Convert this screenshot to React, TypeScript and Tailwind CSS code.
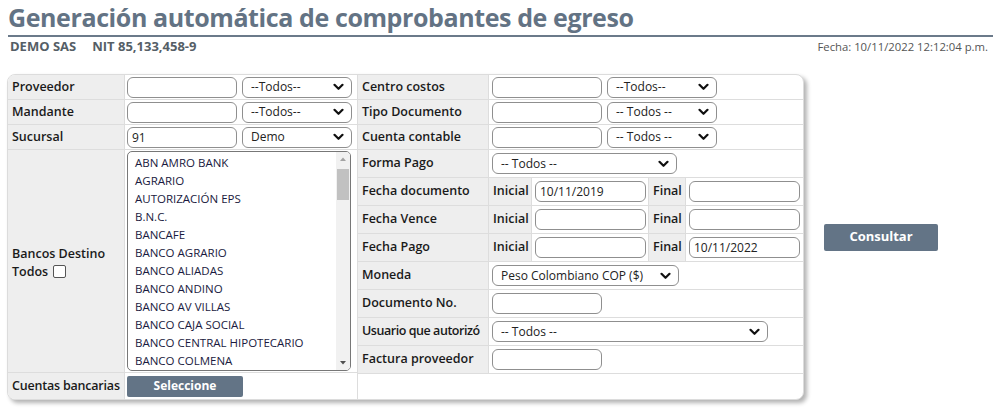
import React from "react";

const F = { fontFamily: '"Open Sans", "Noto Sans", sans-serif' };

function Chevron() {
  return (
    <svg width="11" height="8" viewBox="0 0 11 8" className="shrink-0">
      <path d="M1.5 1.8 L5.5 5.8 L9.5 1.8" fill="none" stroke="#111" strokeWidth="2.2" strokeLinecap="round" strokeLinejoin="round" />
    </svg>
  );
}

function Input({ w, value }: { w: string; value?: string }) {
  return (
    <div className={`${w} h-[21px] rounded-[6px] border border-[#8f8f8f] bg-white px-[4px] text-[12px] leading-[19px] text-[#222]`}>
      {value}
    </div>
  );
}

function Select({ w, value }: { w: string; value: string }) {
  return (
    <div className={`${w} flex h-[21px] items-center justify-between rounded-[6px] border border-[#8f8f8f] bg-white pl-[8px] pr-[7px] text-[12px] text-[#222]`}>
      <span className="leading-none">{value}</span>
      <Chevron />
    </div>
  );
}

const banks = [
  "ABN AMRO BANK",
  "AGRARIO",
  "AUTORIZACIÓN EPS",
  "B.N.C.",
  "BANCAFE",
  "BANCO AGRARIO",
  "BANCO ALIADAS",
  "BANCO ANDINO",
  "BANCO AV VILLAS",
  "BANCO CAJA SOCIAL",
  "BANCO CENTRAL HIPOTECARIO",
  "BANCO COLMENA",
];

function Label({ children, h, extra = "" }: { children: React.ReactNode; h: string; extra?: string }) {
  return (
    <div className={`${h} flex items-center whitespace-nowrap bg-[#eeeeee] pl-[4px] text-[12.5px] font-semibold text-[#1a1a1a] ${extra}`}>{children}</div>
  );
}

export default function App() {
  return (
    <div style={F} className="w-[997px] h-[408px] bg-white relative overflow-hidden">
      <div className="px-[8px] pt-[1px]">
        <h1 className="text-[25px] leading-[32px] font-bold text-[#637384] tracking-[-0.4px]">
          Generación automática de comprobantes de egreso
        </h1>
        <div className="mt-[2px] h-[2px] w-[985px] bg-[#6b7a8a]" />
        <div className="flex items-start justify-between pr-[1px]">
          <div className="pl-[2px] pt-[1px] text-[13px] font-bold text-[#555e66] leading-[17px]">
            DEMO SAS<span className="ml-[16px]">NIT 85,133,458-9</span>
          </div>
          <div className="pt-[2px] text-[11.3px] leading-[15px] text-[#555]">Fecha: 10/11/2022 12:12:04 p.m.</div>
        </div>
      </div>

      <div className="mt-[19px] ml-[7px] flex items-center gap-[20px]">
        {/* panel */}
        <div className="flex w-[797px] h-[326px] rounded-[8px] border border-[#dcdcdc] bg-white shadow-[3px_3px_4px_rgba(0,0,0,0.3)] overflow-hidden">
          {/* left table */}
          <div className="flex w-[349px] flex-col">
            <div className="flex h-[25px] border-b border-[#dddddd]">
              <Label h="h-full w-[117px]" extra="border-r border-[#dddddd]">Proveedor</Label>
              <div className="flex flex-1 items-center gap-[5px] pl-[2px]">
                <Input w="w-[110px]" />
                <Select w="w-[110px]" value="--Todos--" />
              </div>
            </div>
            <div className="flex h-[25px] border-b border-[#dddddd]">
              <Label h="h-full w-[117px]" extra="border-r border-[#dddddd]">Mandante</Label>
              <div className="flex flex-1 items-center gap-[5px] pl-[2px]">
                <Input w="w-[110px]" />
                <Select w="w-[110px]" value="--Todos--" />
              </div>
            </div>
            <div className="flex h-[25px] border-b border-[#dddddd]">
              <Label h="h-full w-[117px]" extra="border-r border-[#dddddd]">Sucursal</Label>
              <div className="flex flex-1 items-center gap-[5px] pl-[2px]">
                <Input w="w-[110px]" value="91" />
                <Select w="w-[110px]" value="Demo" />
              </div>
            </div>
            <div className="flex h-[223px] border-b border-[#dddddd]">
              <div className="flex h-full w-[117px] flex-col justify-center border-r border-[#dddddd] bg-[#eeeeee] pl-[4px] pt-[3px] text-[12.5px] font-semibold leading-[18px] text-[#1a1a1a]">
                <div>Bancos Destino</div>
                <div className="flex items-center gap-[5px]">
                  Todos
                  <span className="inline-block h-[13px] w-[13px] rounded-[2px] border border-[#555] bg-white" />
                </div>
              </div>
              <div className="flex flex-1 items-center pl-[2px]">
                <div className="flex h-[220px] w-[224px] overflow-hidden rounded-[5px] border border-[#777] bg-white">
                  <div className="flex-1 pl-[7px] pt-[2px] text-[11.5px] leading-[18px] text-[#1a1a40]">
                    {banks.map((b) => (
                      <div key={b} className="whitespace-nowrap">{b}</div>
                    ))}
                  </div>
                  <div className="flex w-[14px] flex-col items-center bg-[#f1f1f1]">
                    <svg width="14" height="14" viewBox="0 0 14 14"><path d="M4 9 L7 5.5 L10 9 Z" fill="#a3a3a3" /></svg>
                    <div className="mt-[3px] h-[31px] w-[12px] bg-[#c1c1c1]" />
                    <div className="flex-1" />
                    <svg width="14" height="14" viewBox="0 0 14 14"><path d="M4 5 L7 8.5 L10 5 Z" fill="#505050" /></svg>
                  </div>
                </div>
              </div>
            </div>
            <div className="flex h-[26px] flex-1">
              <Label h="h-full w-[117px]" extra="border-r border-[#dddddd] tracking-[-0.2px]">Cuentas bancarias</Label>
              <div className="flex flex-1 items-center pl-[2px]">
                <div className="flex h-[21px] w-[116px] items-center justify-center rounded-[2px] bg-[#637486] text-[12px] font-bold text-white">Seleccione</div>
              </div>
            </div>
          </div>

          {/* right table */}
          <div className="flex flex-1 flex-col border-l border-[#dddddd]">
            <div className="flex h-[25px] border-b border-[#dddddd]">
              <Label h="h-full w-[131px]" extra="border-r border-[#dddddd]">Centro costos</Label>
              <div className="flex flex-1 items-center gap-[5px] pl-[3px]">
                <Input w="w-[110px]" />
                <Select w="w-[110px]" value="--Todos--" />
              </div>
            </div>
            <div className="flex h-[25px] border-b border-[#dddddd]">
              <Label h="h-full w-[131px]" extra="border-r border-[#dddddd]">Tipo Documento</Label>
              <div className="flex flex-1 items-center gap-[5px] pl-[3px]">
                <Input w="w-[110px]" />
                <Select w="w-[110px]" value="-- Todos --" />
              </div>
            </div>
            <div className="flex h-[25px] border-b border-[#dddddd]">
              <Label h="h-full w-[131px]" extra="border-r border-[#dddddd]">Cuenta contable</Label>
              <div className="flex flex-1 items-center gap-[5px] pl-[3px]">
                <Input w="w-[110px]" />
                <Select w="w-[110px]" value="-- Todos --" />
              </div>
            </div>
            <div className="flex h-[28px] border-b border-[#dddddd]">
              <Label h="h-full w-[131px]" extra="border-r border-[#dddddd]">Forma Pago</Label>
              <div className="flex flex-1 items-center pl-[3px]">
                <Select w="w-[185px]" value="-- Todos --" />
              </div>
            </div>
            {[
              ["Fecha documento", "10/11/2019", ""],
              ["Fecha Vence", "", ""],
              ["Fecha Pago", "", "10/11/2022"],
            ].map(([l, a, b]) => (
              <div key={l} className="flex h-[28px] border-b border-[#dddddd]">
                <Label h="h-full w-[131px]" extra="border-r border-[#dddddd]">{l}</Label>
                <Label h="h-full w-[43px]" extra="border-r border-[#dddddd]">Inicial</Label>
                <div className="flex h-full w-[117px] items-center border-r border-[#dddddd] pl-[3px]">
                  <Input w="w-[111px]" value={a} />
                </div>
                <Label h="h-full w-[37px]" extra="border-r border-[#dddddd]">Final</Label>
                <div className="flex h-full flex-1 items-center pl-[3px]">
                  <Input w="w-[111px]" value={b} />
                </div>
              </div>
            ))}
            <div className="flex h-[28px] border-b border-[#dddddd]">
              <Label h="h-full w-[131px]" extra="border-r border-[#dddddd]">Moneda</Label>
              <div className="flex flex-1 items-center pl-[3px]">
                <Select w="w-[187px]" value="Peso Colombiano COP ($)" />
              </div>
            </div>
            <div className="flex h-[28px] border-b border-[#dddddd]">
              <Label h="h-full w-[131px]" extra="border-r border-[#dddddd]">Documento No.</Label>
              <div className="flex flex-1 items-center pl-[3px]">
                <Input w="w-[110px]" />
              </div>
            </div>
            <div className="flex h-[28px] border-b border-[#dddddd]">
              <Label h="h-full w-[131px]" extra="border-r border-[#dddddd] tracking-[-0.45px] pl-[3px]">Usuario que autorizó</Label>
              <div className="flex flex-1 items-center pl-[3px]">
                <Select w="w-[276px]" value="-- Todos --" />
              </div>
            </div>
            <div className="flex h-[28px] border-b border-[#dddddd]">
              <Label h="h-full w-[131px]" extra="border-r border-[#dddddd]">Factura proveedor</Label>
              <div className="flex flex-1 items-center pl-[3px]">
                <Input w="w-[110px]" />
              </div>
            </div>
            <div className="flex-1" />
          </div>
        </div>

        <div className="flex h-[27px] w-[114px] items-center justify-center rounded-[2px] bg-[#637486] text-[13px] font-bold text-white">
          Consultar
        </div>
      </div>
    </div>
  );
}
